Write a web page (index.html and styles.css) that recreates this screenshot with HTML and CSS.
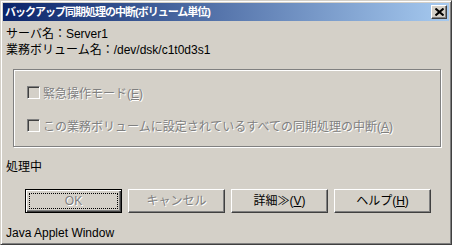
FILE: index.html
```html
<!DOCTYPE html>
<html lang="ja">
<head>
    <meta charset="utf-8">
    <title>バックアップ同期処理の中断(ボリューム単位)</title>
    <link rel="stylesheet" href="styles.css">
</head>
<body>

    <div class="window">

        <div class="titleBar">
            <span class="titleText">バックアップ同期処理の中断(ボリューム単位)</span>
            <div class="closeBtn">
                <svg width="9" height="8" viewBox="0 0 9 8">
                    <path d="M0.5 0.5l8 7M8.5 0.5l-8 7" stroke="#000" stroke-width="2"/>
                </svg>
            </div>
        </div>

        <div class="content">
            <div class="info">サーバ名：Server1</div>
            <div class="info">業務ボリューム名：/dev/dsk/c1t0d3s1</div>

            <div class="group">
                <div class="checkRow">
                    <span class="checkBox"></span>
                    <span class="disabledText">緊急操作モード(<u>E</u>)</span>
                </div>
                <div class="checkRow">
                    <span class="checkBox"></span>
                    <span class="disabledText">この業務ボリュームに設定されているすべての同期処理の中断(<u>A</u>)</span>
                </div>
            </div>

            <div class="status">処理中</div>

            <div class="buttons">
                <div class="btn default">
                    <span class="focusRect"></span>
                    <span class="disabledText">OK</span>
                </div>
                <div class="btn">
                    <span class="disabledText">キャンセル</span>
                </div>
                <div class="btn">詳細≫(<u>V</u>)</div>
                <div class="btn">ヘルプ(<u>H</u>)</div>
            </div>

            <div class="footer">Java Applet Window</div>
        </div>

    </div>

</body>
</html>
```

FILE: styles.css
```css
* {
    margin: 0;
    padding: 0;
    box-sizing: border-box;
}

body {
    background: #d4d0c8;
    font-family: 'Liberation Sans', 'Noto Sans CJK JP', sans-serif;
    font-size: 12px;
    color: #000;
}

.window {
    width: 452px;
    height: 245px;
    background: #d4d0c8;
    border: 1px solid;
    border-color: #d4d0c8 #404040 #404040 #d4d0c8;
    box-shadow: inset 1px 1px #fff, inset -1px -1px #808080;
    padding: 2px;
    overflow: hidden;
}

.titleBar {
    height: 18px;
    background: linear-gradient(to right, #0a246a, #a6caf0);
    display: flex;
    align-items: center;
    justify-content: space-between;
    padding: 0 2px 0 2px;
}

.titleText {
    color: #fff;
    font-weight: bold;
    font-size: 11px;
    letter-spacing: -1px;
    line-height: 18px;
    white-space: nowrap;
}

.closeBtn {
    width: 16px;
    height: 14px;
    background: #d4d0c8;
    border: 1px solid;
    border-color: #fff #404040 #404040 #fff;
    box-shadow: inset -1px -1px #808080;
    display: flex;
    align-items: center;
    justify-content: center;
}

.content {
    padding: 5px 0 0 3px;
}

.info {
    line-height: 16px;
    white-space: nowrap;
}

.group {
    margin: 11px 0 0 7px;
    width: 428px;
    height: 78px;
    border: 1px solid #808080;
    box-shadow: inset 1px 1px #fff, 1px 1px #fff;
    padding: 16px 0 0 13px;
    display: flex;
    flex-direction: column;
    gap: 20px;
}

.checkRow {
    height: 13px;
    display: flex;
    align-items: center;
    gap: 3px;
    white-space: nowrap;
}

.checkBox {
    width: 13px;
    height: 13px;
    flex: none;
    background: #d4d0c8;
    border: 1px solid;
    border-color: #808080 #fff #fff #808080;
    box-shadow: inset 1px 1px #404040;
}

.disabledText {
    color: #808080;
    text-shadow: 1px 1px #fff;
}

.status {
    margin-top: 12px;
    line-height: 16px;
}

.buttons {
    margin-top: 14px;
    padding-left: 19px;
    display: flex;
    gap: 6px;
}

.btn {
    position: relative;
    width: 97px;
    height: 24px;
    border: 1px solid;
    border-color: #fff #404040 #404040 #fff;
    box-shadow: inset -1px -1px #808080;
    display: flex;
    align-items: center;
    justify-content: center;
    white-space: nowrap;
    line-height: 16px;
}

.btn.default {
    border: 1px solid #000;
    box-shadow: inset 1px 1px #fff, inset -1px -1px #404040, inset -2px -2px #808080;
}

.focusRect {
    position: absolute;
    left: 3px;
    top: 3px;
    right: 3px;
    bottom: 3px;
    border: 1px dotted #000;
}

.footer {
    margin-top: 12px;
    line-height: 16px;
}
```
